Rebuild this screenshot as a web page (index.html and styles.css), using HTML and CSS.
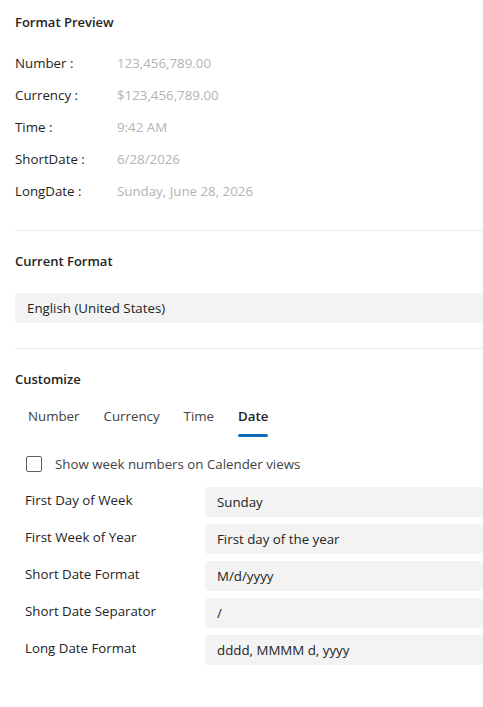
FILE: index.html
```html
<!DOCTYPE html>
<html lang="en">
<head>
    <meta charset="UTF-8">
    <meta name="viewport" content="width=device-width, initial-scale=1.0">
    <title>Regional Format</title>
    <link rel="stylesheet" href="styles.css">
</head>
<body>
    <div class="settings">
        <section class="section">
            <h2>Format Preview</h2>
            <div class="preview-list">
                <div class="preview-row"><span class="preview-label">Number :</span><span class="preview-value">123,456,789.00</span></div>
                <div class="preview-row"><span class="preview-label">Currency :</span><span class="preview-value">$123,456,789.00</span></div>
                <div class="preview-row"><span class="preview-label">Time :</span><span class="preview-value">9:42 AM</span></div>
                <div class="preview-row"><span class="preview-label">ShortDate :</span><span class="preview-value">6/28/2026</span></div>
                <div class="preview-row"><span class="preview-label">LongDate :</span><span class="preview-value">Sunday, June 28, 2026</span></div>
            </div>
        </section>

        <hr class="divider">

        <section class="section current">
            <h2>Current Format</h2>
            <div class="field-box wide">English (United States)</div>
        </section>

        <hr class="divider">

        <section class="section">
            <h2>Customize</h2>
            <div class="tabs">
                <button class="tab">Number</button>
                <button class="tab">Currency</button>
                <button class="tab">Time</button>
                <button class="tab active">Date</button>
            </div>

            <label class="check-row">
                <input type="checkbox">
                <span class="box"></span>
                <span>Show week numbers on Calender views</span>
            </label>

            <div class="form-grid">
                <span class="form-label">First Day of Week</span>
                <div class="field-box">Sunday</div>
                <span class="form-label">First Week of Year</span>
                <div class="field-box">First day of the year</div>
                <span class="form-label">Short Date Format</span>
                <div class="field-box">M/d/yyyy</div>
                <span class="form-label">Short Date Separator</span>
                <div class="field-box">/</div>
                <span class="form-label">Long Date Format</span>
                <div class="field-box">dddd, MMMM d, yyyy</div>
            </div>
        </section>
    </div>
</body>
</html>
```

FILE: styles.css
```css
* {
    margin: 0;
    padding: 0;
    box-sizing: border-box;
}
body {
    font-family: 'Open Sans', 'Noto Sans', sans-serif;
    font-size: 13.3px;
    color: #242424;
    background: #fff;
}
.settings {
    padding: 12px 0 40px 15px;
}
h2 {
    font-size: 13px;
    font-weight: 600;
    line-height: 20px;
}
.preview-list {
    margin-top: 15px;
}
.preview-row {
    display: flex;
    align-items: center;
    height: 32px;
}
.preview-label {
    width: 102px;
}
.preview-value {
    color: #b3b3b3;
}
.divider {
    border: none;
    border-top: 1px solid #ebebeb;
    margin: 23px 0 20px;
}
.current {
    padding-bottom: 2px;
}
.field-box {
    height: 30px;
    display: flex;
    align-items: center;
    padding: 0 12px;
    background: #f3f3f3;
    border-radius: 4px;
}
.field-box.wide {
    margin-top: 22px;
}
.tabs {
    display: flex;
    padding-left: 1px;
    margin-top: 5px;
}
.tab {
    border: none;
    background: none;
    font: inherit;
    color: #424242;
    padding: 12px 12px 14px;
    line-height: 20px;
    position: relative;
}
.tab.active {
    color: #242424;
    font-weight: 600;
}
/* selected tab indicator */
.tab.active::after {
    content: '';
    position: absolute;
    left: 12px;
    right: 12px;
    bottom: 3px;
    height: 3px;
    border-radius: 2px;
    background: #0f6cbd;
}
.check-row {
    display: flex;
    align-items: center;
    gap: 13px;
    margin: 10px 0 0 11px;
    height: 28px;
    color: #424242;
}
.check-row input {
    display: none;
}
.check-row .box {
    width: 16px;
    height: 16px;
    border: 1px solid #616161;
    border-radius: 2px;
}
.form-grid {
    display: grid;
    grid-template-columns: 180px 1fr;
    row-gap: 7px;
    margin: 9px 0 0 10px;
    align-items: start;
}
.form-label {
    line-height: 26px;
}
```
